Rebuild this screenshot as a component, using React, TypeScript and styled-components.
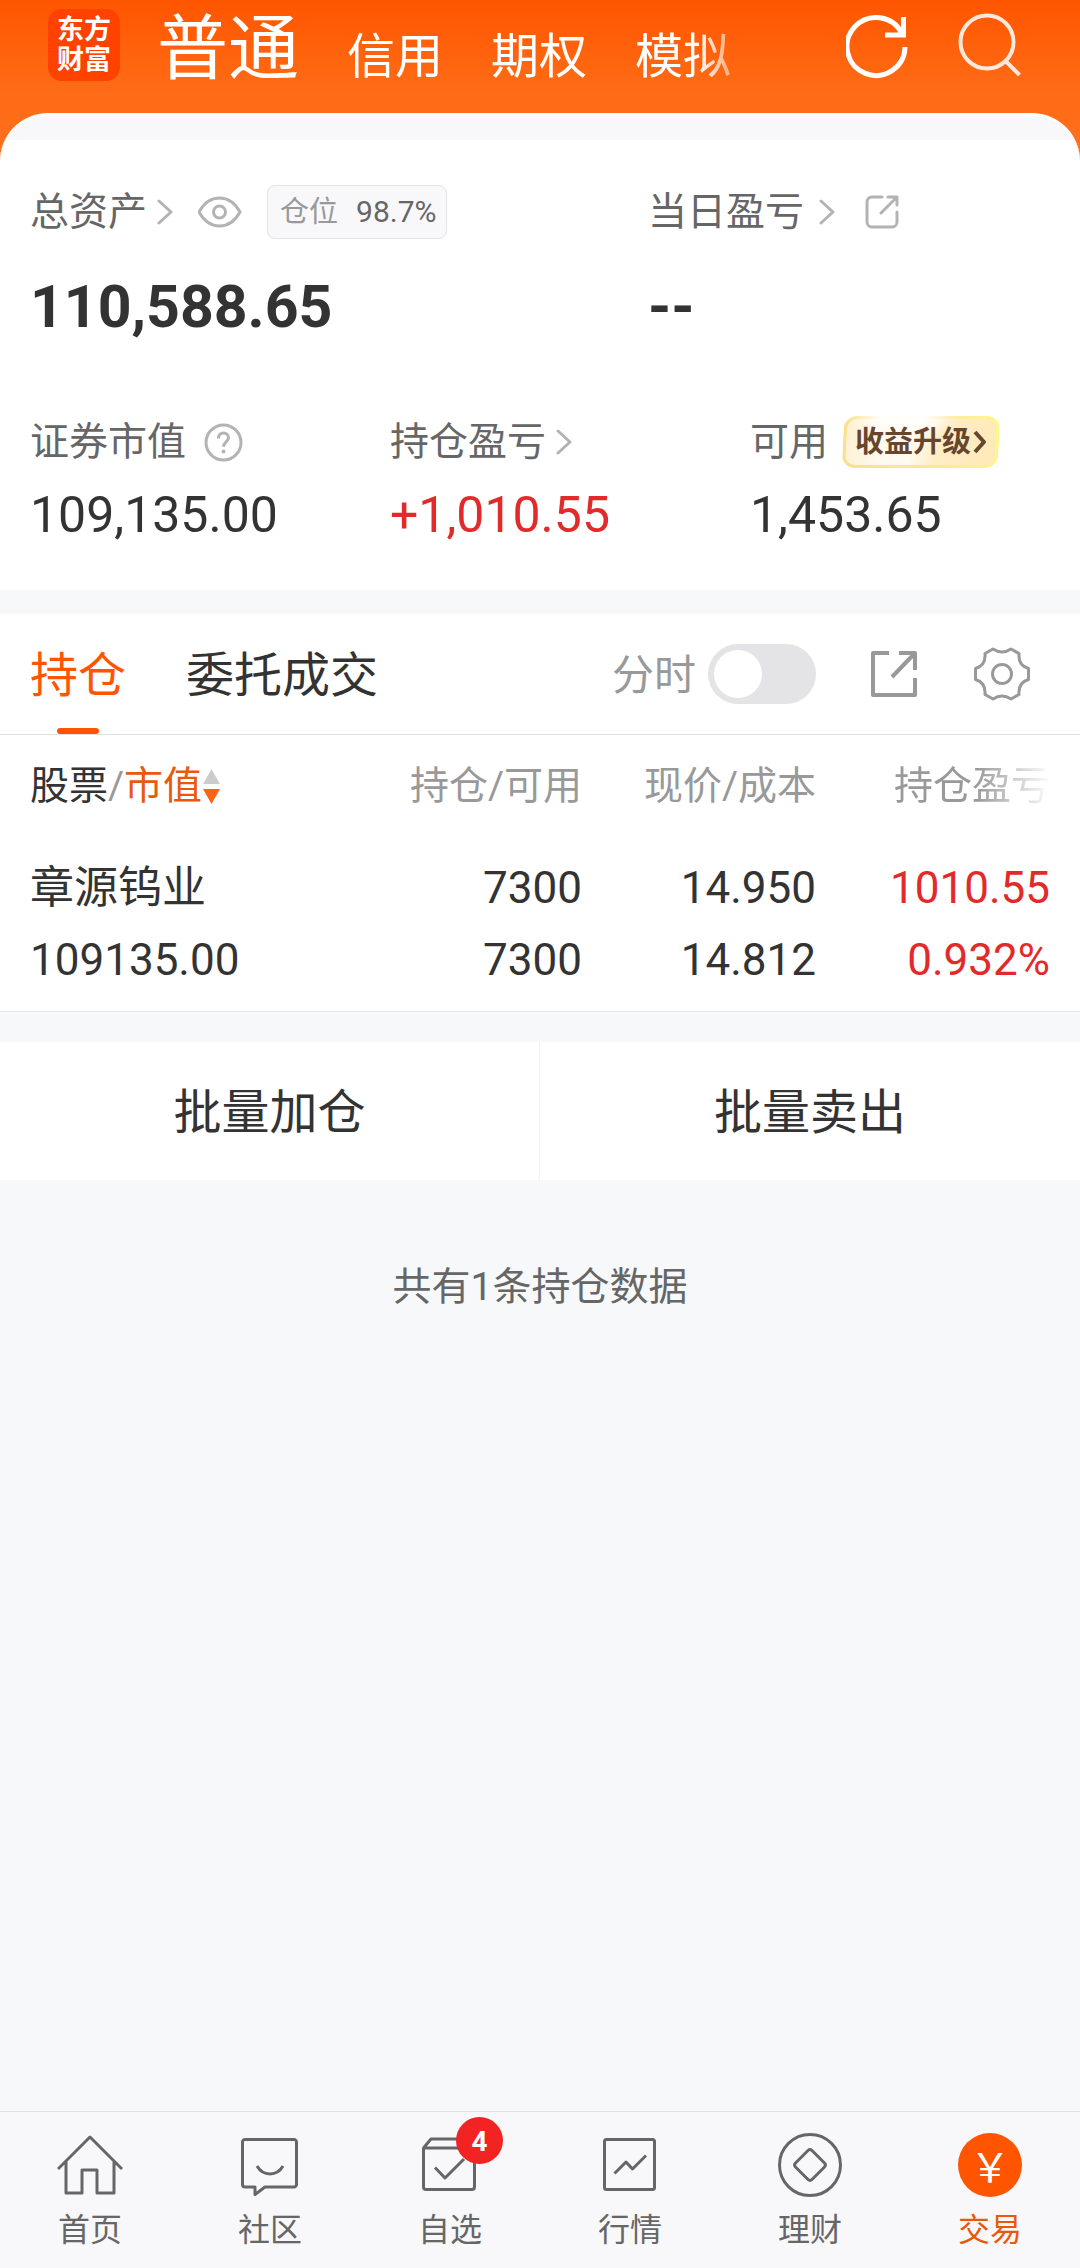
import React, { useState } from "react";
import styled, { createGlobalStyle, css } from "styled-components";

const color = {
  brand: "#ff5500",
  ink: "#333333",
  label: "#666666",
  muted: "#999999",
  faint: "#b3b3b3",
  up: "#e32a2a",
  page: "#f7f8fa",
  strip: "#f8f8fb",
  line: "#e0e0e2",
};

const GlobalStyle = createGlobalStyle`
  *, *::before, *::after { box-sizing: border-box; }
  body {
    margin: 0;
    background: ${color.page};
    color: ${color.ink};
    font-family: Roboto, "Noto Sans CJK SC", sans-serif;
    line-height: 1.4;
  }
  button {
    margin: 0;
    padding: 0;
    border: 0;
    background: none;
    color: inherit;
    font: inherit;
    cursor: pointer;
  }
  a { color: inherit; text-decoration: none; }
  svg { display: block; flex: none; fill: none; stroke: currentColor; }
`;

const Page = styled.div`
  display: flex;
  flex-direction: column;
  min-height: 100vh;
`;

const Top = styled.div`
  background: linear-gradient(#ff5500, #ff6a14 84px, #ff7020 160px);
`;

const Header = styled.header`
  display: flex;
  align-items: flex-start;
  height: 113px;
  padding: 0 58px 0 48px;
`;

const Logo = styled.a`
  display: flex;
  flex: none;
  align-items: center;
  justify-content: center;
  width: 72px;
  height: 72px;
  margin-top: 9px;
  border-radius: 14px;
  background: #ff4200;
  color: #ffffff;
  font-size: 27px;
  font-weight: 700;
  line-height: 30px;
  text-align: center;
`;

const AccountTabs = styled.nav`
  display: flex;
  flex: 1;
  align-items: baseline;
  gap: 48px;
  min-width: 0;
  margin-left: 37px;
  overflow: hidden;
  white-space: nowrap;
  mask-image: linear-gradient(to right, #000 541px, transparent 600px);
`;

const AccountTab = styled.button<{ $active?: boolean }>`
  flex: none;
  color: #ffffff;
  font-size: ${(p) => (p.$active ? 71 : 48)}px;
  line-height: 98px;
`;

const HeaderActions = styled.div`
  display: flex;
  flex: none;
  gap: 48px;
  padding-top: 9px;
  color: #ffffff;
`;

const HeaderAction = styled.button<{ $soft?: boolean }>`
  opacity: ${(p) => (p.$soft ? 0.86 : 1)};
`;

const Sheet = styled.main`
  overflow: hidden;
  border-top: 3px solid #ffffff;
  border-radius: 48px 48px 0 0;
  background: #ffffff;

  &::before {
    content: "";
    display: block;
    height: 24px;
    background: ${color.strip};
  }
`;

const Totals = styled.section`
  display: grid;
  grid-template-columns: 103fr 77fr;
  padding-top: 45px;
`;

const Breakdown = styled.section`
  display: grid;
  grid-template-columns: repeat(3, 1fr);
  padding: 76px 0 45px;
`;

const Metric = styled.div`
  padding-left: 30px;
`;

const MetricHead = styled.div<{ $gap?: number }>`
  display: flex;
  align-items: center;
  gap: ${(p) => p.$gap ?? 10}px;
  height: 54px;
  color: ${color.label};
  font-size: 39px;
  line-height: 54px;
  white-space: nowrap;
`;

const TotalValue = styled.div`
  margin-top: 36px;
  font-size: 59px;
  font-weight: 700;
  line-height: 64px;
`;

const Value = styled.div<{ $up?: boolean }>`
  margin-top: 16px;
  color: ${(p) => (p.$up ? color.up : color.ink)};
  font-size: 50px;
  line-height: 60px;
`;

const IconButton = styled.button<{ $pad?: number }>`
  padding: 0 ${(p) => p.$pad ?? 0}px;
  color: ${color.faint};
`;

const Ratio = styled.span`
  display: flex;
  align-items: center;
  gap: 18px;
  height: 54px;
  padding: 0 9px 0 12px;
  border: 1px solid #e3e3e5;
  border-radius: 8px;
  background: ${color.strip};
  color: ${color.label};
  font-size: 30px;
`;

const RatioLabel = styled.span`
  color: ${color.muted};
  font-size: 29px;
`;

const Upgrade = styled.button`
  position: relative;
  display: flex;
  align-items: center;
  gap: 2px;
  height: 52px;
  margin-left: 4px;
  padding: 0 13px;
  color: #68452d;
  font-size: 29px;
  font-weight: 700;
  line-height: 52px;
  z-index: 0;

  &::before {
    content: "";
    position: absolute;
    inset: 0 1px;
    z-index: -1;
    transform: skewX(-3deg);
    border: 3px solid transparent;
    border-radius: 13px;
    background:
      radial-gradient(ellipse 56px 24px at 38% 0, #fffefa 40%, rgba(255, 253, 246, 0)) border-box,
      linear-gradient(105deg, #fff0cf, #fffaf0 30%, #fffaf0 45%, #ffedc4 62%, #ffe9b8) padding-box,
      linear-gradient(75deg, #fbe08a, #fbe59a 45%, #fbe79a 60%, #fdf98e) border-box;
  }
`;

const Positions = styled.section`
  margin-top: 24px;
  border-bottom: 1px solid #e9eaed;
  background: #ffffff;
`;

const Toolbar = styled.div`
  display: flex;
  align-items: center;
  height: 121px;
  padding: 0 50px 0 30px;
  border-bottom: 1px solid ${color.line};
`;

const Tabs = styled.div`
  display: flex;
  flex: 1;
  align-self: stretch;
  gap: 60px;
`;

const Tab = styled.button<{ $active?: boolean }>`
  position: relative;
  padding-top: 4px;
  color: ${(p) => (p.$active ? color.brand : color.ink)};
  font-size: 48px;

  ${(p) =>
    p.$active &&
    css`
      &::after {
        content: "";
        position: absolute;
        bottom: 0;
        left: 50%;
        width: 42px;
        height: 6px;
        margin-left: -21px;
        border-radius: 3px;
        background: ${color.brand};
      }
    `}
`;

const SwitchLabel = styled.label`
  display: flex;
  align-items: center;
  gap: 12px;
  margin-right: 55px;
  color: ${color.muted};
  font-size: 42px;
`;

const SwitchText = styled.span`
  padding-top: 4px;
`;

const Switch = styled.input`
  width: 108px;
  height: 60px;
  margin: 0;
  padding: 6px;
  appearance: none;
  border-radius: 30px;
  background: #e4e4e6;
  cursor: pointer;

  &::before {
    content: "";
    display: block;
    width: 48px;
    height: 48px;
    border-radius: 50%;
    background: #ffffff;
  }

  &:checked {
    background: ${color.brand};
  }

  &:checked::before {
    margin-left: 48px;
  }
`;

const ToolActions = styled.div`
  display: flex;
  align-items: center;
  gap: 57px;
`;

const ToolButton = styled.button`
  color: ${color.muted};
`;

const Table = styled.table`
  width: 100%;
  border-collapse: collapse;
  table-layout: fixed;
`;

const Col = styled.col<{ $width?: number }>`
  width: ${(p) => (p.$width ? `${p.$width}px` : "auto")};
`;

const HeadCell = styled.th<{ $fade?: boolean }>`
  height: 98px;
  padding: 4px 0 0;
  color: ${color.muted};
  font-size: 39px;
  font-weight: 400;
  text-align: right;
  white-space: nowrap;

  &:first-child {
    padding-left: 30px;
    text-align: left;
  }

  &:last-child {
    padding-right: 30px;
  }

  ${(p) =>
    p.$fade &&
    css`
      mask-image: linear-gradient(to left, transparent 28px, #000 104px);
    `}
`;

const SortButton = styled.button`
  display: flex;
  align-items: center;
  gap: 1px;
`;

const SortName = styled.span<{ $active?: boolean }>`
  color: ${(p) => (p.$active ? "#e8590c" : color.ink)};
`;

const Cell = styled.td<{ $up?: boolean }>`
  padding: 19px 0 15px;
  color: ${(p) => (p.$up ? color.up : color.ink)};
  font-size: 44px;
  line-height: 72px;
  text-align: right;
  white-space: nowrap;

  &:first-child {
    padding-left: 30px;
    text-align: left;
  }

  &:last-child {
    padding-right: 30px;
  }
`;

const Line = styled.div``;

const BatchActions = styled.div`
  display: grid;
  grid-template-columns: 1fr 1fr;
  margin-top: 30px;
  background: #ffffff;
`;

const BatchButton = styled.button`
  height: 138px;
  padding-top: 4px;
  font-size: 48px;

  &:first-child {
    border-right: 1px solid #f3f3f5;
  }
`;

const Summary = styled.p`
  flex: 1;
  margin: 0;
  padding-top: 79px;
  color: ${color.label};
  font-size: 39px;
  line-height: 56px;
  text-align: center;
`;

const BottomNav = styled.nav`
  display: grid;
  grid-template-columns: repeat(6, 1fr);
  height: 157px;
  border-top: 1px solid ${color.line};
  background: #f8f8fa;
`;

const NavItem = styled.a<{ $active?: boolean }>`
  display: flex;
  flex-direction: column;
  align-items: center;
  gap: 9px;
  padding-top: 20px;
  color: ${(p) => (p.$active ? "#e8590c" : color.label)};
  font-size: 32px;
  line-height: 46px;
`;

const NavIcon = styled.span`
  position: relative;
  width: 66px;
  height: 66px;
`;

const Badge = styled.span`
  position: absolute;
  top: -15px;
  right: -20px;
  width: 47px;
  height: 47px;
  border-radius: 50%;
  background: #f22323;
  color: #ffffff;
  font-size: 28px;
  font-weight: 700;
  line-height: 49px;
  text-align: center;
`;

const Coin = styled.span`
  display: block;
  width: 64px;
  height: 64px;
  margin: 1px;
  border-radius: 50%;
  background: ${color.brand};
  color: #ffffff;
  font-family: "Noto Sans CJK SC", sans-serif;
  font-size: 40px;
  line-height: 64px;
  text-align: center;
`;

const Chevron = () => (
  <svg width="16" height="26" viewBox="0 0 16 26" strokeWidth="3" color={color.faint} strokeLinecap="round" strokeLinejoin="round">
    <path d="M2 2l12 11L2 24" />
  </svg>
);

const EyeIcon = () => (
  <svg width="44" height="32" viewBox="0 0 44 32" strokeWidth="3">
    <path d="M1 16C6 7 13 2 21.500 2S37 7 42 16c-5 9-12 14-20.500 14S6 25 1 16z" />
    <circle cx="21.500" cy="16" r="6" />
  </svg>
);

const ShareIcon = () => (
  <svg width="34" height="34" viewBox="0 0 34 34" strokeWidth="3" strokeLinecap="round" strokeLinejoin="round">
    <path d="M17 2H7a5 5 0 0 0-5 5v20a5 5 0 0 0 5 5h20a5 5 0 0 0 5-5V17M23 2h9v8M32 2L16 18" />
  </svg>
);

const HelpIcon = () => (
  <svg width="39" height="39" viewBox="0 0 39 39" strokeWidth="3">
    <circle cx="19.5" cy="19.5" r="17.5" />
    <path d="M14.500 15.500c0-3.600 2.200-5.500 5-5.500s5 1.900 5 4.800c0 4-5 4.200-5 9" />
    <circle cx="19.500" cy="28.500" r="2" fill="currentColor" stroke="none" />
  </svg>
);

const RefreshIcon = () => (
  <svg width="64" height="70" viewBox="0 0 64 70" strokeWidth="5">
    <path d="M59 38A29 29 0 1 1 56 24.600M57.500 8v18H39" />
  </svg>
);

const SearchIcon = () => (
  <svg width="64" height="70" viewBox="0 0 64 70" strokeWidth="4">
    <circle cx="29" cy="33" r="26.500" />
    <path d="M48 52.500L61.500 66" />
  </svg>
);

const ExportIcon = () => (
  <svg width="46" height="46" viewBox="0 0 46 46" strokeWidth="4" strokeLinejoin="round">
    <path d="M18 2H2v42h42V27M28 2h16v17M44 2L21 26" />
  </svg>
);

const GearIcon = () => (
  <svg width="56" height="56" viewBox="0 0 56 56" strokeWidth="3" strokeLinejoin="round">
    <path d="M19 3q9 6 18 0l8 4.500q-1 12 9.500 15v11q-10.500 3-9.500 15L37 53q-9-6-18 0l-8-4.500q1-12-9.500-15v-11q10.500-3 9.500-15z" />
    <circle cx="28" cy="28" r="9.500" />
  </svg>
);

const SortIcon = () => (
  <svg width="17" height="36" viewBox="0 0 17 36">
    <path d="M8.500 1L17 16H0z" fill="#cccccc" stroke="none" />
    <path d="M8.500 36L17 21H0z" fill="#fa6414" stroke="none" />
  </svg>
);

const UpgradeArrow = () => (
  <svg width="14" height="24" viewBox="0 0 14 24" strokeWidth="4" strokeLinejoin="round">
    <path d="M2 2l9 10-9 10" />
  </svg>
);

const Glyph = ({ children }: { children: React.ReactNode }) => (
  <svg width="66" height="66" viewBox="0 0 66 66" strokeWidth="3" strokeLinejoin="round">
    {children}
  </svg>
);

const navItems = [
  {
    label: "首页",
    icon: <Glyph><path d="M1 37L33 5l32 32M9 30v31h16V38h15v23h17V30" /></Glyph>,
  },
  {
    label: "社区",
    icon: <Glyph><path d="M8 7.500h49a2.500 2.500 0 0 1 2.500 2.500v42.500a2.500 2.500 0 0 1-2.500 2.500H28L18 62.500V55H8a2.500 2.500 0 0 1-2.500-2.500V10A2.500 2.500 0 0 1 8 7.500zM20 34c6 10.500 20 10.500 26 0" /></Glyph>,
  },
  {
    label: "自选",
    badge: 4,
    icon: <Glyph><path d="M6.500 16h51v39a2.500 2.500 0 0 1-2.500 2.500H9A2.500 2.500 0 0 1 6.500 55zL14 7h36l7.500 9M18 35.500L28 46l19-19" /></Glyph>,
  },
  {
    label: "行情",
    icon: <Glyph><rect x="7.500" y="7.500" width="50" height="50" rx="2" /><path d="M17.500 41.500L29 30l6.500 7L49 23.500" /></Glyph>,
  },
  {
    label: "理财",
    icon: <Glyph><circle cx="33" cy="33" r="30.500" /><path d="M31 18.500q2-2 4 0L47.500 31q2 2 0 4L35 47.500q-2 2-4 0L18.500 35q-2-2 0-4z" /></Glyph>,
  },
  { label: "交易", active: true, icon: <Coin>{"\uFFE5"}</Coin> },
];

export default function App() {
  const [intraday, setIntraday] = useState(false);

  return (
    <Page>
      <GlobalStyle />
      <Top>
        <Header>
          <Logo href="#home">东方<br />财富</Logo>
          <AccountTabs aria-label="账户">
            <AccountTab $active>普通</AccountTab>
            <AccountTab>信用</AccountTab>
            <AccountTab>期权</AccountTab>
            <AccountTab>模拟</AccountTab>
          </AccountTabs>
          <HeaderActions>
            <HeaderAction aria-label="刷新"><RefreshIcon /></HeaderAction>
            <HeaderAction $soft aria-label="搜索"><SearchIcon /></HeaderAction>
          </HeaderActions>
        </Header>
        <Sheet>
          <Totals>
            <Metric>
              <MetricHead>
                总资产
                <Chevron />
                <IconButton $pad={15} aria-label="隐藏金额"><EyeIcon /></IconButton>
                <Ratio><RatioLabel>仓位</RatioLabel>98.7%</Ratio>
              </MetricHead>
              <TotalValue>110,588.65</TotalValue>
            </Metric>
            <Metric>
              <MetricHead $gap={15}>
                当日盈亏
                <Chevron />
                <IconButton $pad={15} aria-label="分享"><ShareIcon /></IconButton>
              </MetricHead>
              <TotalValue>--</TotalValue>
            </Metric>
          </Totals>
          <Breakdown>
            <Metric>
              <MetricHead $gap={18}>
                证券市值
                <IconButton aria-label="说明"><HelpIcon /></IconButton>
              </MetricHead>
              <Value>109,135.00</Value>
            </Metric>
            <Metric>
              <MetricHead>持仓盈亏<Chevron /></MetricHead>
              <Value $up>+1,010.55</Value>
            </Metric>
            <Metric>
              <MetricHead>
                可用
                <Upgrade>收益升级<UpgradeArrow /></Upgrade>
              </MetricHead>
              <Value>1,453.65</Value>
            </Metric>
          </Breakdown>
        </Sheet>
      </Top>

      <Positions>
        <Toolbar>
          <Tabs>
            <Tab $active>持仓</Tab>
            <Tab>委托成交</Tab>
          </Tabs>
          <SwitchLabel>
            <SwitchText>分时</SwitchText>
            <Switch
              type="checkbox"
              checked={intraday}
              onChange={(e) => setIntraday(e.target.checked)}
            />
          </SwitchLabel>
          <ToolActions>
            <ToolButton aria-label="导出"><ExportIcon /></ToolButton>
            <ToolButton aria-label="设置"><GearIcon /></ToolButton>
          </ToolActions>
        </Toolbar>
        <Table>
          <colgroup>
            <Col />
            <Col $width={234} />
            <Col $width={234} />
            <Col $width={264} />
          </colgroup>
          <thead>
            <tr>
              <HeadCell>
                <SortButton>
                  <span>
                    <SortName>股票</SortName>/<SortName $active>市值</SortName>
                  </span>
                  <SortIcon />
                </SortButton>
              </HeadCell>
              <HeadCell>持仓/可用</HeadCell>
              <HeadCell>现价/成本</HeadCell>
              <HeadCell $fade>持仓盈亏</HeadCell>
            </tr>
          </thead>
          <tbody>
            <tr>
              <Cell><Line>章源钨业</Line><Line>109135.00</Line></Cell>
              <Cell><Line>7300</Line><Line>7300</Line></Cell>
              <Cell><Line>14.950</Line><Line>14.812</Line></Cell>
              <Cell $up><Line>1010.55</Line><Line>0.932%</Line></Cell>
            </tr>
          </tbody>
        </Table>
      </Positions>

      <BatchActions>
        <BatchButton>批量加仓</BatchButton>
        <BatchButton>批量卖出</BatchButton>
      </BatchActions>

      <Summary>共有1条持仓数据</Summary>

      <BottomNav aria-label="主导航">
        {navItems.map((item) => (
          <NavItem key={item.label} href={`#${item.label}`} $active={item.active}>
            <NavIcon>
              {item.icon}
              {item.badge && <Badge>{item.badge}</Badge>}
            </NavIcon>
            {item.label}
          </NavItem>
        ))}
      </BottomNav>
    </Page>
  );
}
